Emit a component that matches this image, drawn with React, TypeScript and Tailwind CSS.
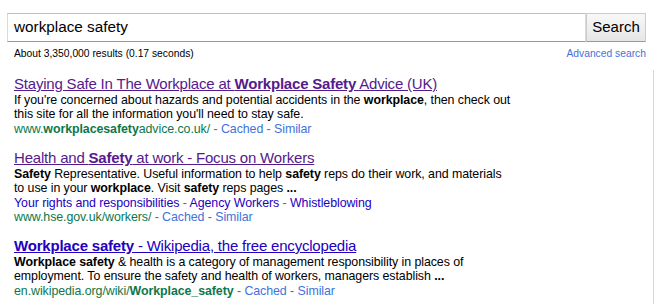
import React from 'react';

type Part = string | { b: string };

function Txt({ parts }: { parts: Part[] }) {
  return (
    <>
      {parts.map((p, i) => (typeof p === 'string' ? <span key={i}>{p}</span> : <b key={i}>{p.b}</b>))}
    </>
  );
}

function Sep() {
  return <span className="text-[#666]"> - </span>;
}

function UrlLine({ url }: { url: Part[] }) {
  return (
    <div className="text-[#0e774a] whitespace-nowrap">
      <Txt parts={url} />
      <Sep />
      <span className="text-[#4272db]">Cached</span>
      <Sep />
      <span className="text-[#4272db]">Similar</span>
    </div>
  );
}

type Result = {
  title: Part[];
  visited: boolean;
  lines: Part[][];
  sitelinks?: string[];
  url: Part[];
};

const results: Result[] = [
  {
    title: ['Staying Safe In The Workplace at ', { b: 'Workplace Safety' }, ' Advice (UK)'],
    visited: true,
    lines: [
      ["If you're concerned about hazards and potential accidents in the ", { b: 'workplace' }, ', then check out'],
      ["this site for all the information you'll need to stay safe."],
    ],
    url: ['www.', { b: 'workplacesafety' }, 'advice.co.uk/'],
  },
  {
    title: ['Health and ', { b: 'Safety' }, ' at work - Focus on Workers'],
    visited: true,
    lines: [
      [{ b: 'Safety' }, ' Representative. Useful information to help ', { b: 'safety' }, ' reps do their work, and materials'],
      ['to use in your ', { b: 'workplace' }, '. Visit ', { b: 'safety' }, ' reps pages ', { b: '...' }],
    ],
    sitelinks: ['Your rights and responsibilities', 'Agency Workers', 'Whistleblowing'],
    url: ['www.hse.gov.uk/workers/'],
  },
  {
    title: [{ b: 'Workplace safety' }, ' - Wikipedia, the free encyclopedia'],
    visited: false,
    lines: [
      [{ b: 'Workplace safety' }, ' & health is a category of management responsibility in places of'],
      ['employment. To ensure the safety and health of workers, managers establish ', { b: '...' }],
    ],
    url: ['en.wikipedia.org/wiki/', { b: 'Workplace_safety' }],
  },
];

export default function App() {
  return (
    <div className="w-[654px] h-[304px] bg-white overflow-hidden font-['Liberation_Sans',Arial,sans-serif] text-black">
      {/* search bar */}
      <div className="flex pt-[13px] pl-[7px]">
        <div className="w-[579px] h-[29px] border border-[#d9d9d9] border-t-[#c0c0c0] border-b-[#999] flex items-center pl-[6px] text-[15.3px]">
          workplace safety
        </div>
        <div className="w-[60px] h-[29px] border border-[#ccc] border-b-[#999] bg-gradient-to-b from-[#f8f8f8] to-[#e6e6e6] flex items-center justify-center text-[15px]">
          Search
        </div>
      </div>

      <div className="flex justify-between w-[646px] pl-[14px] mt-[5px] text-[10.3px] leading-[13px]">
        <span>About 3,350,000 results (0.17 seconds)</span>
        <span className="text-[#4272db]">Advanced search</span>
      </div>

      <div className="flex mt-[10px] h-[240px]">
        <div className="w-[653px] pl-[14px] pt-[5px]">
          {results.map((r, i) => (
            <div key={i} className="mb-[12.5px]">
              <div
                className={`text-[15px] tracking-[-0.2px] leading-[17px] underline whitespace-nowrap ${
                  r.visited ? 'text-[#551a8b]' : 'text-[#2200c1]'
                }`}
              >
                <Txt parts={r.title} />
              </div>
              <div className="mt-[1px] text-[12.4px] tracking-[-0.07px] leading-[14.4px]">
                {r.lines.map((l, j) => (
                  <div key={j} className="whitespace-nowrap">
                    <Txt parts={l} />
                  </div>
                ))}
                {r.sitelinks && (
                  <div className="whitespace-nowrap text-[#2200c1]">
                    {r.sitelinks.map((s, k) => (
                      <span key={k}>
                        {k > 0 && <Sep />}
                        {s}
                      </span>
                    ))}
                  </div>
                )}
                <UrlLine url={r.url} />
              </div>
            </div>
          ))}
        </div>
        <div className="flex-1 border-l border-[#c9d7f1]" />
      </div>
    </div>
  );
}
